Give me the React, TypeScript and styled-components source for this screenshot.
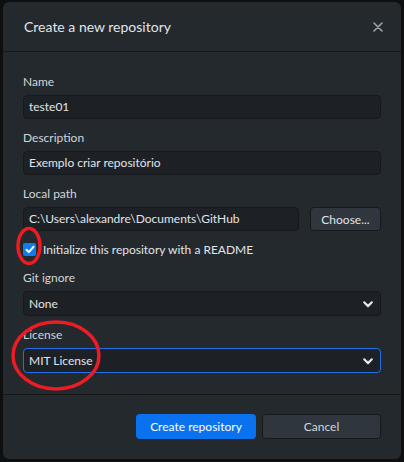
import styled, { createGlobalStyle } from "styled-components";

const GlobalStyle = createGlobalStyle`
  html, body {
    margin: 0;
    padding: 0;
    background: #0e0f10;
    font-family: Lato, "Noto Sans", sans-serif;
  }
`;

const fields = [
  { label: "Name", value: "teste01" },
  { label: "Description", value: "Exemplo criar repositório" },
];

const Chevron = () => (
  <svg width="12" height="12" viewBox="0 0 12 12">
    <path d="M2.2 4.3l3.8 3.8 3.8-3.8" fill="none" stroke="#e1e4e8" strokeWidth="2.2" strokeLinecap="round" strokeLinejoin="round" />
  </svg>
);

export default function App() {
  return (
    <>
      <GlobalStyle />
      <Page>
        <Dialog>
          <Header>
            <Title>Create a new repository</Title>
            <CloseButton aria-label="close">
              <svg width="10" height="10" viewBox="0 0 10 10">
                <path d="M1 1l8 8M9 1l-8 8" stroke="#a0a5ab" strokeWidth="1.6" strokeLinecap="round" />
              </svg>
            </CloseButton>
          </Header>

          <Content>
            {fields.map((f) => (
              <Group key={f.label}>
                <Label>{f.label}</Label>
                <Input>{f.value}</Input>
              </Group>
            ))}

            <Group>
              <Label>Local path</Label>
              <PathRow>
                <Input>C:\Users\alexandre\Documents\GitHub</Input>
                <SecondaryButton>Choose...</SecondaryButton>
              </PathRow>
            </Group>

            <CheckRow>
              <CheckBox>
                <svg width="10" height="9" viewBox="0 0 10 9">
                  <path d="M1.5 4.8l2.3 2.3L8.5 1.8" fill="none" stroke="#fff" strokeWidth="2" strokeLinecap="round" strokeLinejoin="round" />
                </svg>
              </CheckBox>
              <CheckLabel>Initialize this repository with a README</CheckLabel>
            </CheckRow>

            <Group>
              <Label>Git ignore</Label>
              <Select>
                <span>None</span>
                <Chevron />
              </Select>
            </Group>

            <Group>
              <Label>License</Label>
              <Select $focused>
                <span>MIT License</span>
                <Chevron />
              </Select>
            </Group>
          </Content>

          <Footer>
            <PrimaryButton>Create repository</PrimaryButton>
            <FooterButton>Cancel</FooterButton>
          </Footer>

          <Annotations width="398" height="457" viewBox="0 0 398 457">
            <ellipse cx="26" cy="244" rx="11" ry="17.5" fill="none" stroke="#ed1c24" strokeWidth="3.5" />
            <ellipse cx="53" cy="353.5" rx="43" ry="33.5" fill="none" stroke="#ed1c24" strokeWidth="3.5" />
          </Annotations>
        </Dialog>
      </Page>
    </>
  );
}

const Page = styled.div`
  width: 404px;
  height: 462px;
  padding: 2px 3px 0 3px;
  box-sizing: border-box;
`;

const Dialog = styled.div`
  position: relative;
  width: 398px;
  height: 457px;
  background: #24292e;
  border-radius: 6px;
  display: flex;
  flex-direction: column;
  color: #d6dade;
  overflow: hidden;
`;

const Header = styled.div`
  height: 49px;
  display: flex;
  align-items: center;
  justify-content: space-between;
  padding: 0 14px 0 21px;
  border-bottom: 1px solid #141618;
`;

const Title = styled.h1`
  margin: 0;
  font-size: 14px;
  font-weight: 400;
  color: #e1e4e8;
`;

const CloseButton = styled.button`
  background: none;
  border: none;
  padding: 4px;
  display: flex;
  cursor: pointer;
`;

const Content = styled.div`
  padding: 22px 20px 21px 20px;
  display: flex;
  flex-direction: column;
  gap: 11px;
  border-bottom: 1px solid #141618;
`;

const Group = styled.div`
  display: flex;
  flex-direction: column;
  gap: 5px;
`;

const Label = styled.label`
  font-size: 12px;
  line-height: 16px;
  color: #d1d5da;
`;

const Input = styled.div`
  flex: 1;
  height: 24px;
  box-sizing: border-box;
  background: #1d2125;
  border: 1px solid #16191c;
  border-radius: 4px;
  padding: 0 5px;
  font-size: 12px;
  line-height: 22px;
  color: #e1e4e8;
  white-space: nowrap;
  overflow: hidden;
`;

const PathRow = styled.div`
  display: flex;
  gap: 11px;
`;

const SecondaryButton = styled.button`
  width: 71px;
  height: 24px;
  background: #2f363d;
  border: 1px solid #16191c;
  border-radius: 4px;
  color: #e1e4e8;
  font-family: inherit;
  font-size: 12px;
  padding: 0;
`;

const CheckRow = styled.div`
  display: flex;
  align-items: center;
  gap: 7px;
  height: 15px;
  margin-bottom: 2px;
`;

const CheckBox = styled.span`
  width: 13px;
  height: 13px;
  background: #0f7cf0;
  border-radius: 2px;
  display: flex;
  align-items: center;
  justify-content: center;
`;

const CheckLabel = styled.span`
  font-size: 12px;
  color: #e1e4e8;
`;

const Select = styled.div<{ $focused?: boolean }>`
  height: 25px;
  box-sizing: border-box;
  background: #1d2125;
  border: 1px solid ${(p) => (p.$focused ? "#1f6feb" : "#16191c")};
  border-radius: 4px;
  padding: 0 6px 0 5px;
  display: flex;
  align-items: center;
  justify-content: space-between;
  font-size: 12px;
  color: #e1e4e8;
`;

const Footer = styled.div`
  flex: 1;
  display: flex;
  justify-content: flex-end;
  align-items: center;
  gap: 6px;
  padding: 0 20px 2px 20px;
`;

const PrimaryButton = styled.button`
  width: 120px;
  height: 25px;
  background: #0a72ef;
  border: none;
  border-radius: 4px;
  color: #fff;
  font-family: inherit;
  font-size: 12px;
  padding: 0;
`;

const FooterButton = styled(SecondaryButton)`
  width: 119px;
  height: 25px;
  color: #d1d5da;
`;

const Annotations = styled.svg`
  position: absolute;
  left: 0;
  top: 0;
  pointer-events: none;
`;
